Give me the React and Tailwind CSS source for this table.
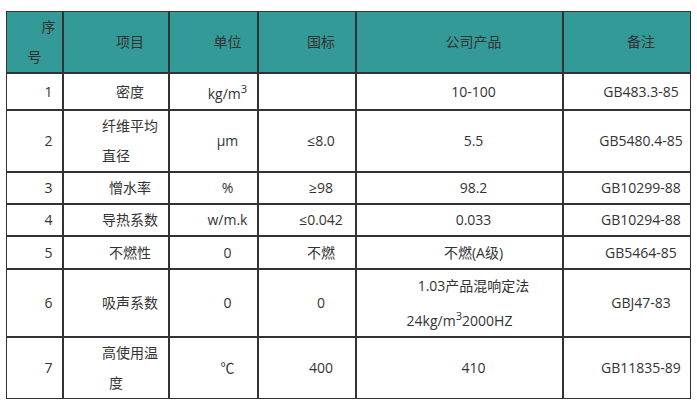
import React from "react";

const cell = "border border-[#333] text-center indent-[2em] p-0 align-middle";
const head = cell + " bg-[#349a98] font-normal";

const Sup = ({ children }) => (
  <sup className="static align-super text-[0.8em] leading-[30px]">{children}</sup>
);

const rows = [
  { h: "h-[37px]", no: "1", item: "密度", unit: <>kg/m<Sup>3</Sup></>, std: "", prod: "10-100", note: "GB483.3-85" },
  { h: "h-[62px]", no: "2", item: <>纤维平均<br />直径</>, unit: "μm", std: "≤8.0", prod: "5.5", note: "GB5480.4-85" },
  { h: "h-[32px]", no: "3", item: "憎水率", unit: "%", std: "≥98", prod: "98.2", note: "GB10299-88" },
  { h: "h-[32px]", no: "4", item: "导热系数", unit: "w/m.k", std: "≤0.042", prod: "0.033", note: "GB10294-88" },
  { h: "h-[33px]", no: "5", item: "不燃性", unit: "0", std: "不燃", prod: "不燃(A级)", note: "GB5464-85" },
  {
    h: "h-[68px]",
    no: "6",
    item: "吸声系数",
    unit: "0",
    std: "0",
    prod: <>1.03产品混响定法<br />24kg/m<Sup>3</Sup>2000HZ</>,
    note: "GBJ47-83",
  },
  { h: "h-[61px]", no: "7", item: <>高使用温<br />度</>, unit: "℃", std: "400", prod: "410", note: "GB11835-89" },
];

export default function App() {
  return (
    <div className="w-[697px] h-[409px] bg-white pt-[11px] pl-[6px] text-[14px] leading-[30px] text-[#333] font-['Open_Sans','Noto_Sans_CJK_SC',sans-serif]">
      <table className="table-fixed w-[685px] border-separate border-spacing-0">
        <colgroup>
          <col className="w-[57px]" />
          <col className="w-[106px]" />
          <col className="w-[89px]" />
          <col className="w-[98px]" />
          <col className="w-[207px]" />
          <col className="w-[128px]" />
        </colgroup>
        <thead>
          <tr className="h-[62px]">
            <th className={head}>序<br />号</th>
            <th className={head}>项目</th>
            <th className={head}>单位</th>
            <th className={head}>国标</th>
            <th className={head}>公司产品</th>
            <th className={head}>备注</th>
          </tr>
        </thead>
        <tbody>
          {rows.map((r) => (
            <tr key={r.no} className={r.h}>
              <td className={cell}>{r.no}</td>
              <td className={cell}>{r.item}</td>
              <td className={cell}>{r.unit}</td>
              <td className={cell}>{r.std}</td>
              <td className={cell}>{r.prod}</td>
              <td className={cell}>{r.note}</td>
            </tr>
          ))}
        </tbody>
      </table>
    </div>
  );
}
